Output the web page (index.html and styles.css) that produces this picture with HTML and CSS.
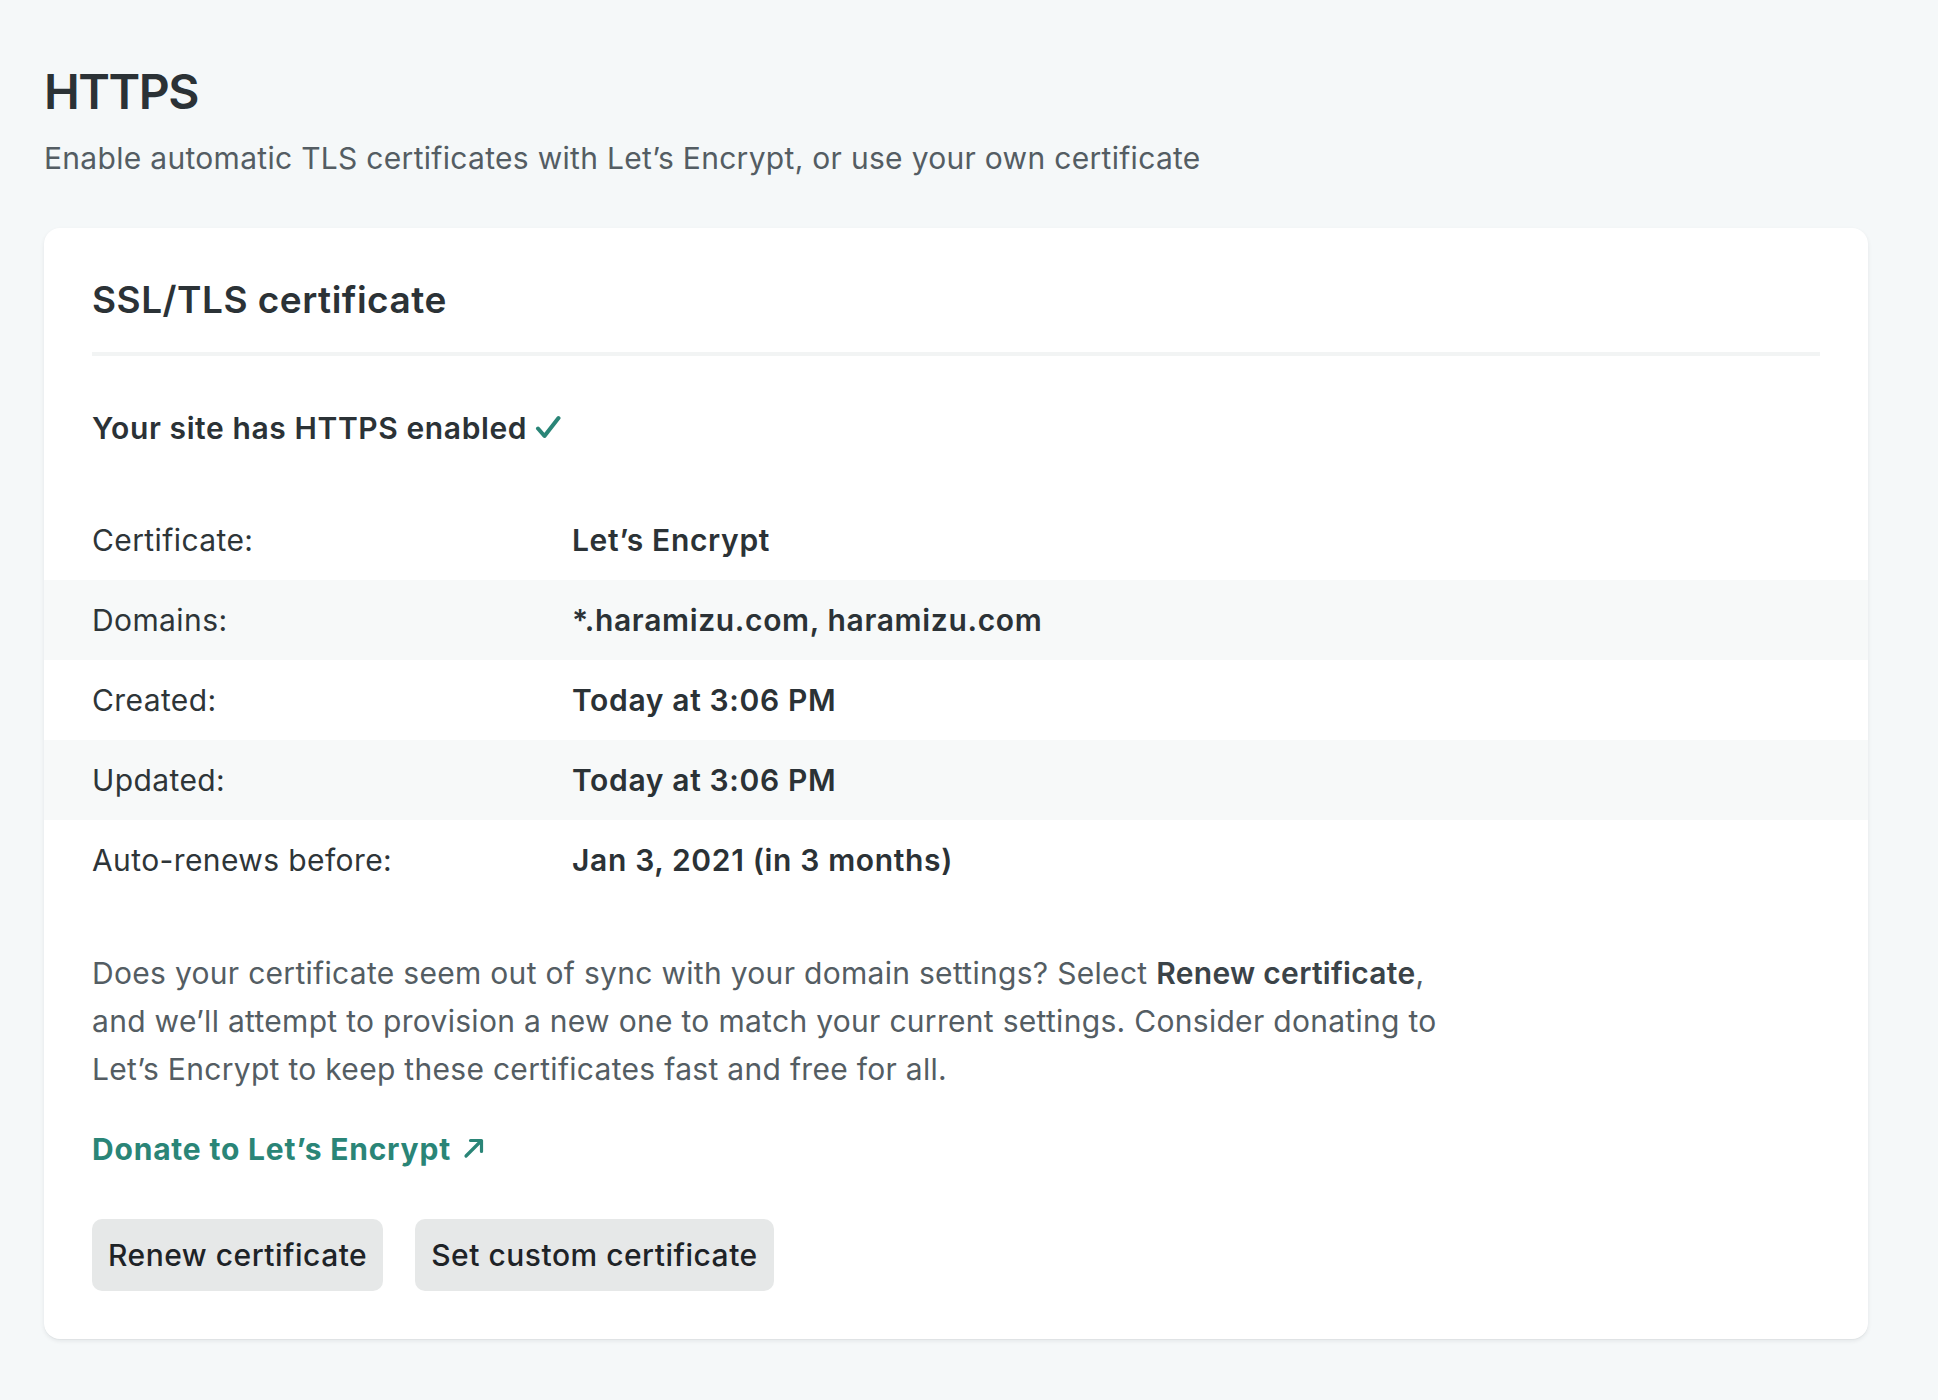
FILE: index.html
```html
<!DOCTYPE html>
<html lang="en">
<head>
<meta charset="utf-8">
<title>HTTPS</title>
<link rel="stylesheet" href="styles.css">
</head>
<body>
<main class="page">
  <header class="page-header">
    <h1 class="page-title">HTTPS</h1>
    <p class="page-subtitle">Enable automatic TLS certificates with Let’s Encrypt, or use your own certificate</p>
  </header>

  <section class="card">
    <h2 class="card-title">SSL/TLS certificate</h2>
    <div class="status">
      <span>Your site has HTTPS enabled</span>
      <svg class="check" width="26" height="24" viewBox="0 0 26 24" aria-hidden="true">
        <path d="M3 13.5 L9.5 21 L23.5 3" fill="none" stroke="#2a8577" stroke-width="4" stroke-linecap="round" stroke-linejoin="round"/>
      </svg>
    </div>

    <dl class="details">
      <div class="row"><dt>Certificate:</dt><dd>Let’s Encrypt</dd></div>
      <div class="row alt"><dt>Domains:</dt><dd>*.haramizu.com, haramizu.com</dd></div>
      <div class="row"><dt>Created:</dt><dd>Today at 3:06 PM</dd></div>
      <div class="row alt"><dt>Updated:</dt><dd>Today at 3:06 PM</dd></div>
      <div class="row"><dt>Auto-renews before:</dt><dd>Jan 3, 2021 (in 3 months)</dd></div>
    </dl>

    <p class="note">Does your certificate seem out of sync with your domain settings? Select <strong>Renew certificate</strong>, and we’ll attempt to provision a new one to match your current settings. Consider donating to Let’s Encrypt to keep these certificates fast and free for all.</p>

    <a class="donate" href="#"><span>Donate to Let’s Encrypt</span>
      <svg class="arrow" width="22" height="22" viewBox="0 0 22 22" aria-hidden="true">
        <path d="M3 19 L18 4 M7.5 3.5 H18.5 V14.5" fill="none" stroke="#2a8577" stroke-width="3.2" stroke-linecap="round" stroke-linejoin="round"/>
      </svg>
    </a>

    <div class="actions">
      <button class="btn" type="button">Renew certificate</button>
      <button class="btn" type="button">Set custom certificate</button>
    </div>
  </section>
</main>
</body>
</html>
```

FILE: styles.css
```css
* { box-sizing: border-box; }

html, body {
  margin: 0;
  padding: 0;
  background: #f5f8f9;
}

body {
  font-family: Inter, "Noto Sans", "Liberation Sans", sans-serif;
  color: #2e3538;
  -webkit-font-smoothing: antialiased;
}

.page {
  padding: 64px 70px 60px 44px;
}

.page-title {
  margin: 0;
  font-size: 48px;
  line-height: 56px;
  font-weight: 600;
  color: #2b3236;
  letter-spacing: -1.5px;
}

.page-subtitle {
  margin: 18px 0 0;
  font-size: 30px;
  line-height: 40px;
  letter-spacing: 0.3px;
  color: #545d63;
  font-weight: 400;
}

.card {
  margin-top: 50px;
  background: #ffffff;
  border-radius: 16px;
  padding: 48px;
  box-shadow: 0 2px 4px rgba(14, 30, 37, 0.08), 0 1px 1px rgba(14, 30, 37, 0.03);
}

.card-title {
  margin: 0;
  font-size: 37px;
  line-height: 48px;
  letter-spacing: 0.5px;
  font-weight: 600;
  color: #2b3236;
  padding-bottom: 28px;
  border-bottom: 4px solid #f2f4f4;
}

.status {
  margin-top: 52px;
  font-size: 30px;
  line-height: 40px;
  letter-spacing: 0.6px;
  font-weight: 600;
  color: #2b3236;
  display: flex;
  align-items: center;
  gap: 8px;
}

.check { display: block; margin-top: -2px; }

.details {
  margin: 52px -48px 0;
  padding: 0;
}

.row {
  display: flex;
  align-items: center;
  height: 80px;
  padding: 0 48px;
  font-size: 30px;
  line-height: 40px;
}

.row.alt { background: #f7f9f9; }

.row dt {
  width: 480px;
  flex: none;
  font-weight: 400;
  letter-spacing: 0.4px;
  color: #2e3538;
}

.row dd {
  margin: 0;
  font-weight: 600;
  letter-spacing: 0.65px;
  color: #2b3236;
}

.note {
  margin: 49px 0 0;
  max-width: 1360px;
  font-size: 30px;
  line-height: 48px;
  letter-spacing: 0.3px;
  color: #545d63;
}

.note strong {
  font-weight: 600;
  color: #3b4348;
}

.donate {
  display: inline-flex;
  align-items: center;
  gap: 12px;
  margin-top: 32px;
  font-size: 30px;
  line-height: 48px;
  letter-spacing: 0.8px;
  font-weight: 700;
  color: #2a8577;
  text-decoration: none;
}

.arrow { display: block; margin-top: -2px; }

.actions {
  display: flex;
  gap: 32px;
  margin-top: 46px;
}

.btn {
  font-family: inherit;
  font-size: 30px;
  line-height: 40px;
  letter-spacing: 0.5px;
  font-weight: 500;
  color: #1e2327;
  background: #e6e8e8;
  border: none;
  border-radius: 10px;
  height: 72px;
  padding: 0 16px;
  cursor: pointer;
}
```
